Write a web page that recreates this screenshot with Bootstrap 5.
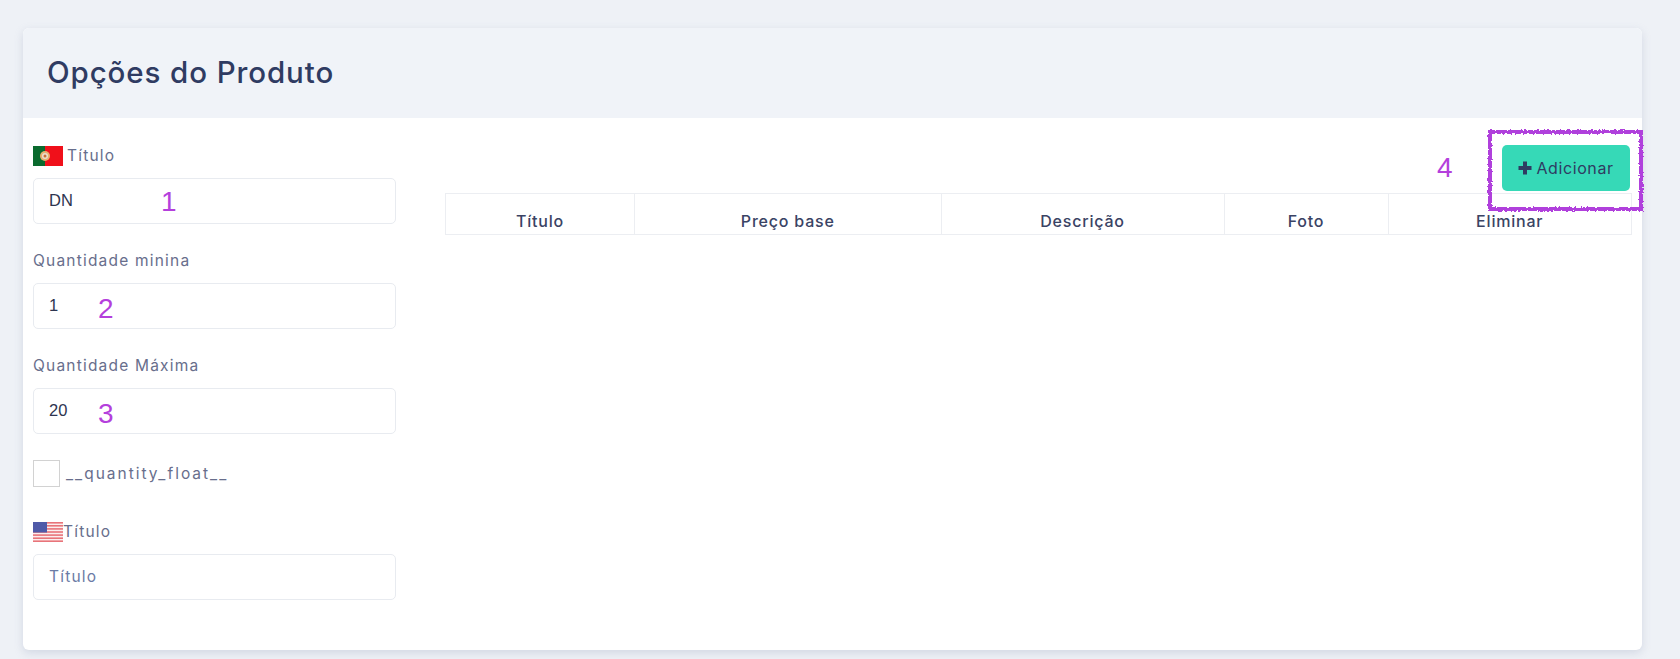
<!doctype html>
<html lang="pt">
<head>
<meta charset="utf-8">
<title>Opções do Produto</title>
<link rel="stylesheet" href="https://cdn.jsdelivr.net/npm/bootstrap@5.3.0/dist/css/bootstrap.min.css">
<style>
html,body{height:100%}
body{background:#eef1f6;font-family:Inter,"Liberation Sans",sans-serif;padding:28px 38px 0 23px;overflow:hidden}
.prod-card{background:#fff;border:0;border-radius:6px;height:622px;box-shadow:0 3px 8px rgba(150,160,185,.3);overflow:visible;position:relative}
.prod-head{background:#f0f3f8;height:90px;padding:0 24px;border-radius:6px 6px 0 0;display:flex;align-items:center}
.prod-head h1{font-size:29.5px;font-weight:500;color:#2f3b62;margin:0;letter-spacing:.9px;position:relative}
.prod-body{padding:27px 10px 0;display:flex;gap:49px}
.left-col{width:363px;flex:none}
.right-col{flex:1;min-width:0}
.fld-label{height:21px;margin-bottom:12px;font-size:15.5px;letter-spacing:1.2px;line-height:21px;color:#686e8c;display:flex;align-items:center;gap:4px}
.fld-label.tight{gap:0}
.fld-wrap{position:relative;margin-bottom:26px}
.fld-input{height:46px;border:1px solid #e8ebf0;border-radius:5px;padding:0 15px 2px;font-size:16.5px;color:#2e3550;font-family:"Liberation Sans",sans-serif;box-shadow:none}
.fld-input.ph{font-family:Inter,sans-serif;font-size:15.5px;letter-spacing:1.2px}
.fld-input.ph::placeholder{color:#6b7ba6;opacity:1}
.chk-row{display:flex;align-items:center;gap:6px;height:27px;margin-bottom:34px;font-size:15.5px;letter-spacing:2px;color:#686e8c}
input.chk-box[type=checkbox]{width:27px;height:27px;border:1px solid #d2d2d2;border-radius:0;margin:0;background-color:#fff;flex:none}
.note{position:absolute;color:#b43fdc;font-family:"Liberation Sans",sans-serif;font-size:28px;line-height:1;font-weight:400;pointer-events:none}
.n1{left:128px;top:10px}
.n2{left:65px;top:12px}
.n3{left:65px;top:12px}
.n4{left:1414px;top:126px}
.scribble{position:absolute;left:1464px;top:101px;width:157px;height:84px;pointer-events:none}
.add-row{display:flex;justify-content:flex-end;padding-right:2px;margin-bottom:2px}
.add-btn{background:#36d9b7;border:0;border-radius:5px;width:128px;height:46px;color:#2f3b62;font-size:16px;letter-spacing:.6px;display:flex;align-items:center;justify-content:center;gap:4px;padding:0}
.add-btn:hover{background:#36d9b7;color:#2f3b62}
.opt-table{width:1186px;table-layout:fixed;margin:0;border-color:#eceef2}
.opt-table th{height:41px;padding:14px 0 0;line-height:26px;font-size:16px;letter-spacing:.8px;font-weight:500;color:#3a4364;text-align:center;border:1px solid #eceef2;vertical-align:middle;box-sizing:border-box}
.w1{width:189px}.w2{width:306.5px}.w3{width:283px}.w4{width:164px}.w5{width:243.500px}
</style>
</head>
<body>
<div class="card prod-card">
  <div class="prod-head"><h1>Opções do Produto</h1></div>
  <div class="prod-body">
    <div class="left-col">
      <label class="fld-label">
        <svg width="30" height="20" viewBox="0 0 30 20"><rect width="12" height="20" fill="#0a6a2e"/><rect x="12" width="18" height="20" fill="#f0101a"/><circle cx="12" cy="10" r="5" fill="#e8b070"/><circle cx="12" cy="10" r="3" fill="#e8e0d0"/><circle cx="12" cy="10" r="1.500" fill="#c8703a"/></svg>
        <span>Título</span>
      </label>
      <div class="fld-wrap"><input class="form-control fld-input" value="DN"><span class="note n1">1</span></div>
      <label class="fld-label">Quantidade minina</label>
      <div class="fld-wrap"><input class="form-control fld-input" value="1"><span class="note n2">2</span></div>
      <label class="fld-label">Quantidade Máxima</label>
      <div class="fld-wrap"><input class="form-control fld-input" value="20"><span class="note n3">3</span></div>
      <div class="chk-row"><input type="checkbox" class="form-check-input chk-box"><span>__quantity_float__</span></div>
      <label class="fld-label tight">
        <svg width="30" height="20" viewBox="0 0 30 20"><rect width="30" height="20" fill="#fbeeee"/><g fill="#e8747a"><rect width="30" height="1.600"/><rect y="3" width="30" height="1.600"/><rect y="6.100" width="30" height="1.600"/><rect y="9.200" width="30" height="1.600"/><rect y="12.300" width="30" height="1.600"/><rect y="15.400" width="30" height="1.600"/><rect y="18.400" width="30" height="1.600"/></g><rect width="14" height="10.500" fill="#4f5aa8"/></svg>
        <span>Título</span>
      </label>
      <div class="fld-wrap mb-0"><input class="form-control fld-input ph" placeholder="Título"></div>
    </div>
    <div class="right-col">
      <div class="add-row">
        <button type="button" class="btn add-btn">
          <svg width="14" height="14" viewBox="0 0 14 14"><path d="M5 0.500h4v4.500h4.500v4H9v4.500H5V9H0.500V5H5z" fill="#2f3b62"/></svg>
          <span>Adicionar</span>
        </button>
      </div>
      <table class="table table-bordered opt-table">
        <colgroup><col class="w1"><col class="w2"><col class="w3"><col class="w4"><col class="w5"></colgroup>
        <thead><tr><th>Título</th><th>Preço base</th><th>Descrição</th><th>Foto</th><th>Eliminar</th></tr></thead>
      </table>
    </div>
  </div>
  <span class="note n4">4</span>
  <svg class="scribble" viewBox="0 0 157 84">
    <defs><filter id="rough" x="-5%" y="-10%" width="110%" height="120%"><feTurbulence type="fractalNoise" baseFrequency=".5" numOctaves="2" seed="4"/><feDisplacementMap in="SourceGraphic" scale="4"/></filter></defs>
    <rect x="3" y="3" width="151" height="77" fill="none" stroke="#b03fdc" stroke-width="4" filter="url(#rough)"/>
  </svg>
</div>
<script src="https://cdn.jsdelivr.net/npm/bootstrap@5.3.0/dist/js/bootstrap.bundle.min.js"></script>
</body>
</html>
